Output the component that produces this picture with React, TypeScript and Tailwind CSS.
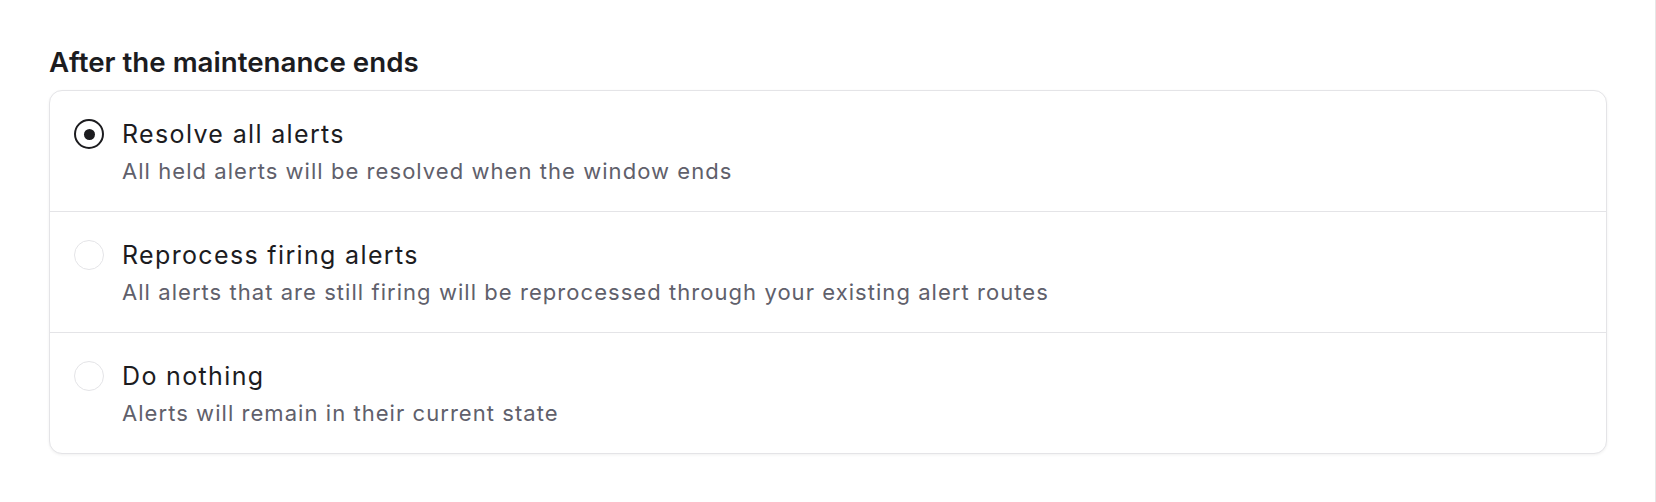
import React from "react";

type Opt = { title: string; desc: string; selected?: boolean };

const options: Opt[] = [
  { title: "Resolve all alerts", desc: "All held alerts will be resolved when the window ends", selected: true },
  { title: "Reprocess firing alerts", desc: "All alerts that are still firing will be reprocessed through your existing alert routes" },
  { title: "Do nothing", desc: "Alerts will remain in their current state" },
];

function Radio({ selected }: { selected?: boolean }) {
  return selected ? (
    <div className="flex h-[30px] w-[30px] items-center justify-center rounded-full border-[2px] border-[#1c1c1f] bg-white">
      <div className="h-[11px] w-[11px] rounded-full bg-[#1c1c1f]" />
    </div>
  ) : (
    <div className="h-[30px] w-[30px] rounded-full border-[1.5px] border-[#e4e4e7] bg-white" />
  );
}

export default function App() {
  return (
    <div
      className="h-[502px] w-[1656px] border-r border-[#e6e6e6] bg-white pl-[49px] pr-[48px] pt-[44px]"
      style={{ fontFamily: "Inter, 'Noto Sans', sans-serif" }}
    >
      <h2 className="text-[27.7px] leading-[36px] font-semibold text-[#1c1c1f]">After the maintenance ends</h2>
      <div className="mt-[10px] overflow-hidden rounded-[13px] border border-[#e4e4e7] bg-white shadow-[0_1px_3px_rgba(0,0,0,0.06)]">
        {options.map((o, i) => (
          <div
            key={o.title}
            className={`flex items-start gap-[18px] px-[24px] py-[25px] ${i > 0 ? "border-t border-[#e4e4e7]" : ""}`}
          >
            <div className="flex h-[36px] items-center">
              <Radio selected={o.selected} />
            </div>
            <div className="flex flex-col">
              <div className="text-[25px] leading-[36px] tracking-[1.35px] text-[#1c1c1f]">{o.title}</div>
              <div className="mt-[4px] text-[22px] leading-[30px] tracking-[1.05px] text-[#60606b]">{o.desc}</div>
            </div>
          </div>
        ))}
      </div>
    </div>
  );
}
